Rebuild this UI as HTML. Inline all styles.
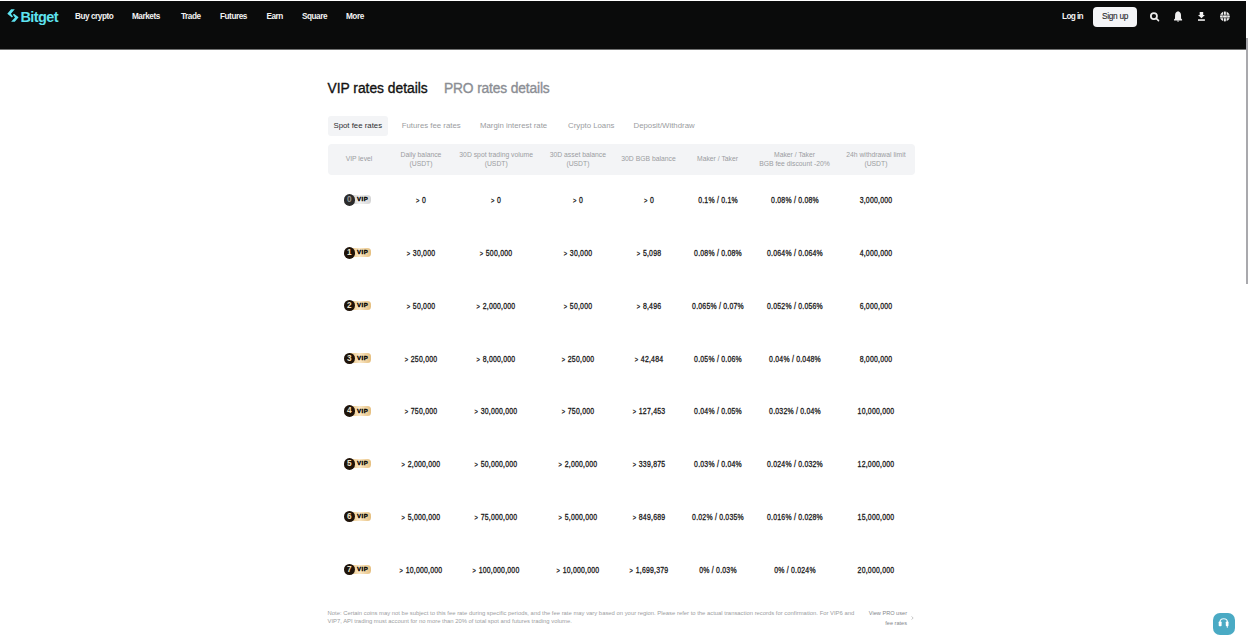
<!DOCTYPE html>
<html><head><meta charset="utf-8">
<style>
*{margin:0;padding:0;box-sizing:border-box}
html,body{width:1248px;height:636px;overflow:hidden;background:#fff;font-family:"Liberation Sans",sans-serif}
.a{position:absolute;white-space:nowrap}
#hdr{position:absolute;left:0;top:1px;width:1246px;height:49px;background:#0a0b0b;border-bottom:1px solid #707171}
#topline{position:absolute;left:0;top:0;width:1248px;height:1px;background:#fff}
#sbar{position:absolute;left:1246px;top:38px;width:2px;height:246px;background:#a9a9ad}
.nav{color:#f2f2f2;font-weight:bold;font-size:8.2px;top:11.5px;line-height:10px;letter-spacing:-0.45px}
.ttl{font-size:13.8px;line-height:16px;top:81px;-webkit-text-stroke:0.35px currentColor}
.tab{font-size:7.8px;line-height:10px;top:121px;color:#9a9ca0}
.th{font-size:6.8px;line-height:9px;color:#9b9da1;text-align:center;width:120px}
.td{font-size:8.2px;line-height:9px;color:#1b1b1b;text-align:center;width:120px;-webkit-text-stroke:0.3px currentColor;letter-spacing:0.25px;transform:scaleX(0.845)}
.note{font-size:5.88px;line-height:8.3px;color:#9c9ea2}
</style></head><body>
<div id="topline"></div>
<div id="hdr"></div>
<div id="sbar"></div>

<!-- logo -->
<svg class="a" style="left:4px;top:6px" width="18" height="20" viewBox="4 6 18 20">
  <path d="M11.1 9.3 L14.8 9.3 L10.9 13.7 L13.0 16.4 L11.9 17.4 L7.3 13.8Z" fill="#5ee3f0"/>
  <path d="M14.8 21.8 L11.1 21.8 L15.0 17.4 L12.9 14.7 L14.0 13.7 L18.6 17.3Z" fill="#5ee3f0"/>
</svg>
<div class="a" style="left:20.5px;top:9px;font-size:14.5px;line-height:16px;font-weight:bold;color:#5ee3f0;letter-spacing:-0.6px">Bitget</div>

<div class="a nav" style="left:75px">Buy crypto</div>
<div class="a nav" style="left:132px">Markets</div>
<div class="a nav" style="left:181px">Trade</div>
<div class="a nav" style="left:220px">Futures</div>
<div class="a nav" style="left:266.5px">Earn</div>
<div class="a nav" style="left:302px">Square</div>
<div class="a nav" style="left:346px">More</div>

<div class="a" style="left:1062px;top:11.2px;font-size:8.3px;line-height:10px;color:#f2f2f2;font-weight:bold;letter-spacing:-0.65px">Log in</div>
<div class="a" style="left:1093px;top:7px;width:44px;height:20px;border-radius:4px;background:#f4f5f7"></div>
<div class="a" style="left:1102px;top:11.2px;font-size:8.3px;line-height:10px;color:#2a2b2e;letter-spacing:-0.3px;-webkit-text-stroke:0.12px #2a2b2e">Sign up</div>

<!-- icons -->
<svg class="a" style="left:1144px;top:8px" width="20" height="16" viewBox="1144 8 20 16">
  <circle cx="1153.9" cy="16.1" r="3.05" fill="none" stroke="#ececec" stroke-width="1.75"/>
  <path d="M1156.2 18.4 L1158.5 20.6" stroke="#ececec" stroke-width="1.6" stroke-linecap="round"/>
</svg>
<svg class="a" style="left:1168px;top:8px" width="20" height="16" viewBox="1168 8 20 16">
  <path d="M1178.05 11.3 C1176.3 11.6 1175.2 12.9 1175.1 15 L1175 18.5 L1174 19.6 L1174 20.4 L1182.1 20.4 L1182.1 19.6 L1181.1 18.5 L1181 15 C1180.9 12.9 1179.8 11.6 1178.05 11.3Z" fill="#f0f0f0"/>
  <path d="M1176.9 20.6 L1179.2 20.6 C1179.1 21.4 1178.6 21.8 1178.05 21.8 C1177.5 21.8 1177 21.4 1176.9 20.6Z" fill="#d8d8d8"/>
</svg>
<svg class="a" style="left:1192px;top:8px" width="20" height="16" viewBox="1192 8 20 16">
  <path d="M1199.7 11.9 L1203.2 11.9 L1203.2 15 L1204.9 15 L1201.45 18.3 L1198 15 L1199.7 15Z" fill="#f2f2f2"/>
  <rect x="1198" y="19.1" width="6.9" height="1.9" fill="#c8c8c8"/>
</svg>
<svg class="a" style="left:1214px;top:8px" width="22" height="16" viewBox="1214 8 22 16">
  <circle cx="1224.9" cy="16.5" r="4.9" fill="#ededed"/>
  <path d="M1223.5 11 L1223.5 15.2 M1226.3 11 L1226.3 15.2 M1223.5 17.8 L1223.5 22 M1226.3 17.8 L1226.3 22" stroke="#0a0b0b" stroke-width="0.8"/>
  <path d="M1219 15.15 L1231 15.15 M1219 17.85 L1231 17.85" stroke="#0a0b0b" stroke-width="0.6"/>
  <path d="M1222.7 15.5 L1222.7 17.5 M1227.1 15.5 L1227.1 17.5" stroke="#0a0b0b" stroke-width="0.5" opacity="0.6"/>
</svg>

<!-- titles -->
<div class="a ttl" style="left:327.5px;color:#121212">VIP rates details</div>
<div class="a ttl" style="left:444px;color:#8b8e94;letter-spacing:-0.15px">PRO rates details</div>

<!-- tabs -->
<div class="a" style="left:328px;top:116px;width:60px;height:20px;border-radius:3px;background:#f3f4f6"></div>
<div class="a tab" style="left:333.5px;color:#2d2e31">Spot fee rates</div>
<div class="a tab" style="left:401.7px">Futures fee rates</div>
<div class="a tab" style="left:480px">Margin interest rate</div>
<div class="a tab" style="left:568px">Crypto Loans</div>
<div class="a tab" style="left:633.5px">Deposit/Withdraw</div>

<!-- table header -->
<div class="a" style="left:327.7px;top:144px;width:587px;height:30.5px;border-radius:4px;background:#f3f4f6"></div>
<div id="thead">
<div class="a th" style="left:299.0px;top:154.3px">VIP level</div>
<div class="a th" style="left:361.0px;top:149.7px">Daily balance<br>(USDT)</div>
<div class="a th" style="left:436.2px;top:149.7px">30D spot trading volume<br>(USDT)</div>
<div class="a th" style="left:517.9px;top:149.7px">30D asset balance<br>(USDT)</div>
<div class="a th" style="left:588.5px;top:154.3px">30D BGB balance</div>
<div class="a th" style="left:657.5px;top:154.3px">Maker / Taker</div>
<div class="a th" style="left:734.5px;top:149.7px">Maker / Taker<br>BGB fee discount -20%</div>
<div class="a th" style="left:815.9px;top:149.7px">24h withdrawal limit<br>(USDT)</div>
</div><!--/thead-->
<div id="tbody">
<div class="a" style="left:350px;top:195.16px;width:20.8px;height:9.3px;border-radius:0 3.5px 3.5px 0;background:linear-gradient(90deg,#c9c9c9,#f2f2f2 45%,#d4d4d4)"></div>
<div class="a" style="left:343.8px;top:194.36px;width:11.2px;height:11.4px;border-radius:50%;background:#2b2b2b"></div>
<div class="a" style="left:343.8px;top:194.36px;width:11.2px;line-height:11.8px;text-align:center;font-size:8.3px;font-weight:bold;color:#9a9a9a">0</div>
<div class="a" style="left:357px;top:195.46px;line-height:9.8px;font-size:6px;font-weight:bold;color:#000;letter-spacing:0.5px;-webkit-text-stroke:0.35px #000">VIP</div>
<div class="a td" style="left:361.0px;top:196.20px"><span style="font-size:6.8px;margin-right:0.5px">&gt;</span> 0</div>
<div class="a td" style="left:436.2px;top:196.20px"><span style="font-size:6.8px;margin-right:0.5px">&gt;</span> 0</div>
<div class="a td" style="left:517.9px;top:196.20px"><span style="font-size:6.8px;margin-right:0.5px">&gt;</span> 0</div>
<div class="a td" style="left:588.5px;top:196.20px"><span style="font-size:6.8px;margin-right:0.5px">&gt;</span> 0</div>
<div class="a td" style="left:657.5px;top:196.20px">0.1% / 0.1%</div>
<div class="a td" style="left:734.5px;top:196.20px">0.08% / 0.08%</div>
<div class="a td" style="left:815.9px;top:196.20px">3,000,000</div>
<div class="a" style="left:350px;top:247.93px;width:20.8px;height:9.3px;border-radius:0 3.5px 3.5px 0;background:linear-gradient(90deg,#e7c183,#fbe8c6 45%,#e5bf80)"></div>
<div class="a" style="left:343.8px;top:247.13px;width:11.2px;height:11.4px;border-radius:50%;background:#1f1309"></div>
<div class="a" style="left:343.8px;top:247.13px;width:11.2px;line-height:11.8px;text-align:center;font-size:8.3px;font-weight:bold;color:#f3e3c4">1</div>
<div class="a" style="left:357px;top:248.23px;line-height:9.8px;font-size:6px;font-weight:bold;color:#000;letter-spacing:0.5px;-webkit-text-stroke:0.35px #000">VIP</div>
<div class="a td" style="left:361.0px;top:248.97px"><span style="font-size:6.8px;margin-right:0.5px">&gt;</span> 30,000</div>
<div class="a td" style="left:436.2px;top:248.97px"><span style="font-size:6.8px;margin-right:0.5px">&gt;</span> 500,000</div>
<div class="a td" style="left:517.9px;top:248.97px"><span style="font-size:6.8px;margin-right:0.5px">&gt;</span> 30,000</div>
<div class="a td" style="left:588.5px;top:248.97px"><span style="font-size:6.8px;margin-right:0.5px">&gt;</span> 5,098</div>
<div class="a td" style="left:657.5px;top:248.97px">0.08% / 0.08%</div>
<div class="a td" style="left:734.5px;top:248.97px">0.064% / 0.064%</div>
<div class="a td" style="left:815.9px;top:248.97px">4,000,000</div>
<div class="a" style="left:350px;top:300.70px;width:20.8px;height:9.3px;border-radius:0 3.5px 3.5px 0;background:linear-gradient(90deg,#e7c183,#fbe8c6 45%,#e5bf80)"></div>
<div class="a" style="left:343.8px;top:299.90px;width:11.2px;height:11.4px;border-radius:50%;background:#1f1309"></div>
<div class="a" style="left:343.8px;top:299.90px;width:11.2px;line-height:11.8px;text-align:center;font-size:8.3px;font-weight:bold;color:#f3e3c4">2</div>
<div class="a" style="left:357px;top:301.00px;line-height:9.8px;font-size:6px;font-weight:bold;color:#000;letter-spacing:0.5px;-webkit-text-stroke:0.35px #000">VIP</div>
<div class="a td" style="left:361.0px;top:301.74px"><span style="font-size:6.8px;margin-right:0.5px">&gt;</span> 50,000</div>
<div class="a td" style="left:436.2px;top:301.74px"><span style="font-size:6.8px;margin-right:0.5px">&gt;</span> 2,000,000</div>
<div class="a td" style="left:517.9px;top:301.74px"><span style="font-size:6.8px;margin-right:0.5px">&gt;</span> 50,000</div>
<div class="a td" style="left:588.5px;top:301.74px"><span style="font-size:6.8px;margin-right:0.5px">&gt;</span> 8,496</div>
<div class="a td" style="left:657.5px;top:301.74px">0.065% / 0.07%</div>
<div class="a td" style="left:734.5px;top:301.74px">0.052% / 0.056%</div>
<div class="a td" style="left:815.9px;top:301.74px">6,000,000</div>
<div class="a" style="left:350px;top:353.47px;width:20.8px;height:9.3px;border-radius:0 3.5px 3.5px 0;background:linear-gradient(90deg,#e7c183,#fbe8c6 45%,#e5bf80)"></div>
<div class="a" style="left:343.8px;top:352.67px;width:11.2px;height:11.4px;border-radius:50%;background:#1f1309"></div>
<div class="a" style="left:343.8px;top:352.67px;width:11.2px;line-height:11.8px;text-align:center;font-size:8.3px;font-weight:bold;color:#f3e3c4">3</div>
<div class="a" style="left:357px;top:353.77px;line-height:9.8px;font-size:6px;font-weight:bold;color:#000;letter-spacing:0.5px;-webkit-text-stroke:0.35px #000">VIP</div>
<div class="a td" style="left:361.0px;top:354.51px"><span style="font-size:6.8px;margin-right:0.5px">&gt;</span> 250,000</div>
<div class="a td" style="left:436.2px;top:354.51px"><span style="font-size:6.8px;margin-right:0.5px">&gt;</span> 8,000,000</div>
<div class="a td" style="left:517.9px;top:354.51px"><span style="font-size:6.8px;margin-right:0.5px">&gt;</span> 250,000</div>
<div class="a td" style="left:588.5px;top:354.51px"><span style="font-size:6.8px;margin-right:0.5px">&gt;</span> 42,484</div>
<div class="a td" style="left:657.5px;top:354.51px">0.05% / 0.06%</div>
<div class="a td" style="left:734.5px;top:354.51px">0.04% / 0.048%</div>
<div class="a td" style="left:815.9px;top:354.51px">8,000,000</div>
<div class="a" style="left:350px;top:406.24px;width:20.8px;height:9.3px;border-radius:0 3.5px 3.5px 0;background:linear-gradient(90deg,#e7c183,#fbe8c6 45%,#e5bf80)"></div>
<div class="a" style="left:343.8px;top:405.44px;width:11.2px;height:11.4px;border-radius:50%;background:#1f1309"></div>
<div class="a" style="left:343.8px;top:405.44px;width:11.2px;line-height:11.8px;text-align:center;font-size:8.3px;font-weight:bold;color:#f3e3c4">4</div>
<div class="a" style="left:357px;top:406.54px;line-height:9.8px;font-size:6px;font-weight:bold;color:#000;letter-spacing:0.5px;-webkit-text-stroke:0.35px #000">VIP</div>
<div class="a td" style="left:361.0px;top:407.28px"><span style="font-size:6.8px;margin-right:0.5px">&gt;</span> 750,000</div>
<div class="a td" style="left:436.2px;top:407.28px"><span style="font-size:6.8px;margin-right:0.5px">&gt;</span> 30,000,000</div>
<div class="a td" style="left:517.9px;top:407.28px"><span style="font-size:6.8px;margin-right:0.5px">&gt;</span> 750,000</div>
<div class="a td" style="left:588.5px;top:407.28px"><span style="font-size:6.8px;margin-right:0.5px">&gt;</span> 127,453</div>
<div class="a td" style="left:657.5px;top:407.28px">0.04% / 0.05%</div>
<div class="a td" style="left:734.5px;top:407.28px">0.032% / 0.04%</div>
<div class="a td" style="left:815.9px;top:407.28px">10,000,000</div>
<div class="a" style="left:350px;top:459.01px;width:20.8px;height:9.3px;border-radius:0 3.5px 3.5px 0;background:linear-gradient(90deg,#e7c183,#fbe8c6 45%,#e5bf80)"></div>
<div class="a" style="left:343.8px;top:458.21px;width:11.2px;height:11.4px;border-radius:50%;background:#1f1309"></div>
<div class="a" style="left:343.8px;top:458.21px;width:11.2px;line-height:11.8px;text-align:center;font-size:8.3px;font-weight:bold;color:#f3e3c4">5</div>
<div class="a" style="left:357px;top:459.31px;line-height:9.8px;font-size:6px;font-weight:bold;color:#000;letter-spacing:0.5px;-webkit-text-stroke:0.35px #000">VIP</div>
<div class="a td" style="left:361.0px;top:460.05px"><span style="font-size:6.8px;margin-right:0.5px">&gt;</span> 2,000,000</div>
<div class="a td" style="left:436.2px;top:460.05px"><span style="font-size:6.8px;margin-right:0.5px">&gt;</span> 50,000,000</div>
<div class="a td" style="left:517.9px;top:460.05px"><span style="font-size:6.8px;margin-right:0.5px">&gt;</span> 2,000,000</div>
<div class="a td" style="left:588.5px;top:460.05px"><span style="font-size:6.8px;margin-right:0.5px">&gt;</span> 339,875</div>
<div class="a td" style="left:657.5px;top:460.05px">0.03% / 0.04%</div>
<div class="a td" style="left:734.5px;top:460.05px">0.024% / 0.032%</div>
<div class="a td" style="left:815.9px;top:460.05px">12,000,000</div>
<div class="a" style="left:350px;top:511.78px;width:20.8px;height:9.3px;border-radius:0 3.5px 3.5px 0;background:linear-gradient(90deg,#e7c183,#fbe8c6 45%,#e5bf80)"></div>
<div class="a" style="left:343.8px;top:510.98px;width:11.2px;height:11.4px;border-radius:50%;background:#1f1309"></div>
<div class="a" style="left:343.8px;top:510.98px;width:11.2px;line-height:11.8px;text-align:center;font-size:8.3px;font-weight:bold;color:#f3e3c4">6</div>
<div class="a" style="left:357px;top:512.08px;line-height:9.8px;font-size:6px;font-weight:bold;color:#000;letter-spacing:0.5px;-webkit-text-stroke:0.35px #000">VIP</div>
<div class="a td" style="left:361.0px;top:512.82px"><span style="font-size:6.8px;margin-right:0.5px">&gt;</span> 5,000,000</div>
<div class="a td" style="left:436.2px;top:512.82px"><span style="font-size:6.8px;margin-right:0.5px">&gt;</span> 75,000,000</div>
<div class="a td" style="left:517.9px;top:512.82px"><span style="font-size:6.8px;margin-right:0.5px">&gt;</span> 5,000,000</div>
<div class="a td" style="left:588.5px;top:512.82px"><span style="font-size:6.8px;margin-right:0.5px">&gt;</span> 849,689</div>
<div class="a td" style="left:657.5px;top:512.82px">0.02% / 0.035%</div>
<div class="a td" style="left:734.5px;top:512.82px">0.016% / 0.028%</div>
<div class="a td" style="left:815.9px;top:512.82px">15,000,000</div>
<div class="a" style="left:350px;top:564.55px;width:20.8px;height:9.3px;border-radius:0 3.5px 3.5px 0;background:linear-gradient(90deg,#e7c183,#fbe8c6 45%,#e5bf80)"></div>
<div class="a" style="left:343.8px;top:563.75px;width:11.2px;height:11.4px;border-radius:50%;background:#1f1309"></div>
<div class="a" style="left:343.8px;top:563.75px;width:11.2px;line-height:11.8px;text-align:center;font-size:8.3px;font-weight:bold;color:#f3e3c4">7</div>
<div class="a" style="left:357px;top:564.85px;line-height:9.8px;font-size:6px;font-weight:bold;color:#000;letter-spacing:0.5px;-webkit-text-stroke:0.35px #000">VIP</div>
<div class="a td" style="left:361.0px;top:565.59px"><span style="font-size:6.8px;margin-right:0.5px">&gt;</span> 10,000,000</div>
<div class="a td" style="left:436.2px;top:565.59px"><span style="font-size:6.8px;margin-right:0.5px">&gt;</span> 100,000,000</div>
<div class="a td" style="left:517.9px;top:565.59px"><span style="font-size:6.8px;margin-right:0.5px">&gt;</span> 10,000,000</div>
<div class="a td" style="left:588.5px;top:565.59px"><span style="font-size:6.8px;margin-right:0.5px">&gt;</span> 1,699,379</div>
<div class="a td" style="left:657.5px;top:565.59px">0% / 0.03%</div>
<div class="a td" style="left:734.5px;top:565.59px">0% / 0.024%</div>
<div class="a td" style="left:815.9px;top:565.59px">20,000,000</div>
</div><!--/tbody-->

<!-- note -->
<div class="a note" style="left:327.5px;top:608.7px">Note: Certain coins may not be subject to this fee rate during specific periods, and the fee rate may vary based on your region. Please refer to the actual transaction records for confirmation. For VIP6 and<br>VIP7, API trading must account for no more than 20% of total spot and futures trading volume.</div>
<div class="a note" style="left:847px;top:609px;width:60px;text-align:right;color:#85878b;line-height:9.5px;font-size:5.6px">View PRO user<br>fee rates</div>
<svg class="a" style="left:910.5px;top:615.5px" width="3" height="4" viewBox="0 0 3 4"><path d="M0.5 0.5 L2.2 2 L0.5 3.5" fill="none" stroke="#b0b0b0" stroke-width="0.7"/></svg>

<!-- help -->
<div class="a" style="left:1213px;top:612.5px;width:22px;height:22px;border-radius:7px;background:#4aaac4"></div>
<svg class="a" style="left:1210px;top:610px" width="28" height="26" viewBox="1210 610 28 26">
  <path d="M1219.9 622.6 C1219.9 620.2 1221.5 618.7 1223.7 618.7 C1225.9 618.7 1227.5 620.2 1227.5 622.6" fill="none" stroke="#eef8fb" stroke-width="1.1"/>
  <rect x="1218.7" y="621.5" width="2.9" height="4.7" rx="0.8" fill="#fff"/>
  <rect x="1225.8" y="621.5" width="2.7" height="4.7" rx="0.8" fill="#fff"/>
  <path d="M1227.3 625.8 L1227.3 627.8" stroke="#fff" stroke-width="0.9"/>
</svg>
</body></html>
